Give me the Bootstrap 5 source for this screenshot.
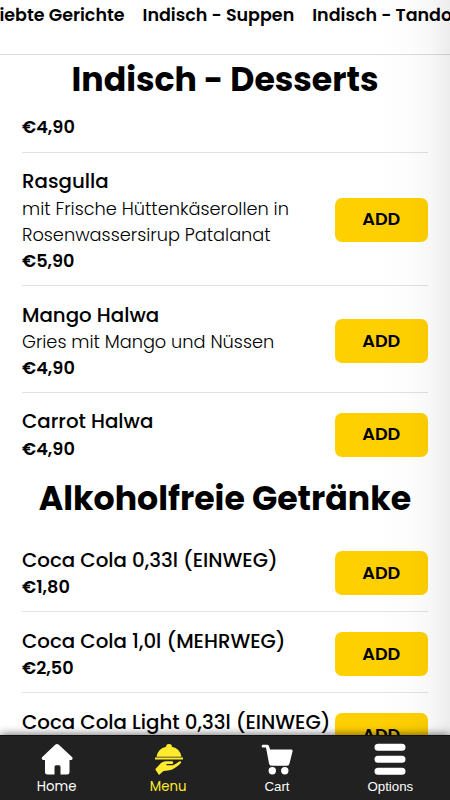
<!DOCTYPE html>
<html lang="de">
<head>
<meta charset="utf-8">
<meta name="viewport" content="width=device-width, initial-scale=1">
<title>Menu</title>
<link href="https://cdn.jsdelivr.net/npm/bootstrap@5.3.0/dist/css/bootstrap.min.css" rel="stylesheet">
<style>
body{font-family:Poppins,Inter,"Open Sans",sans-serif;color:#000;height:800px;overflow:hidden;background:#fff}
.page-shell{width:450px;height:800px}
.cat-nav{height:55px;border-bottom:1px solid #dcdcdc;gap:18px;padding-top:2px}
.cat-nav a{font-size:17.5px;font-weight:600;line-height:26px;color:#000;flex:none}
.cat-nav .cat-first{margin-left:-27.5px}
.menu-list{height:681px}
.menu-title{font-size:33.2px;font-weight:700;line-height:50px;height:50px;margin:0}
.menu-list .second-title{height:56px;line-height:48px}
.dish{margin:0 22px;padding:14px 0 11px;border-bottom:1px solid #e2e2e2}
.dish-tall .dish-name,.dish-end .dish-name{line-height:27px;margin-bottom:1px}
.dish-tall .dish-name{line-height:28px}
.dish-tall .btn-add{margin-bottom:2px}
.dish-cut{padding:9px 0 12px;height:48px}
.drink{padding-top:15px}
.dish-end{border-bottom:0;height:82px;padding-bottom:13px}
.dish-name{font-size:19.8px;font-weight:500;line-height:28px}
.dish-text{font-size:17.75px;font-weight:300;line-height:26px}
.dish-price{font-size:17.7px;font-weight:600;line-height:26px}
.btn-add{width:93.5px;height:44px;border-radius:7px;background:#ffd000;color:#000;font-size:17.7px;font-weight:600;padding:0}
.edge-shade{top:0;right:0;width:76px;height:735px;pointer-events:none;background:linear-gradient(90deg,rgba(0,0,0,0),rgba(0,0,0,.012) 50%,rgba(0,0,0,.03) 75%,rgba(0,0,0,.075))}
.tab-bar{height:65px;padding-top:6px;background:#212121;border-top:1px solid #111;box-shadow:0 0 9px rgba(0,0,0,.65);z-index:3}
.tab-bar a{color:#fff;font-size:13.3px;line-height:18px}
.tab-bar a.active{color:#ffeb2e}
.tab-bar .tab-plain{font-family:"Liberation Sans",Arial,sans-serif}
.tab-bar svg{display:block;width:34px;height:34px;margin-bottom:2px}
</style>
<script src="https://cdn.jsdelivr.net/npm/bootstrap@5.3.0/dist/js/bootstrap.bundle.min.js"></script>
</head>
<body>
<div class="page-shell position-relative d-flex flex-column overflow-hidden">
<nav class="cat-nav d-flex align-items-start flex-shrink-0 overflow-hidden text-nowrap">
<a href="#" class="cat-first text-decoration-none">Beliebte Gerichte</a>
<a href="#" class="text-decoration-none">Indisch - Suppen</a>
<a href="#" class="text-decoration-none">Indisch - Tandoori</a>
</nav>
<main class="menu-list overflow-hidden flex-shrink-0">
<h2 class="menu-title text-center text-nowrap">Indisch - Desserts</h2>
<div class="dish dish-cut"><div class="dish-price">€4,90</div></div>
<div class="dish dish-tall d-flex align-items-center justify-content-between">
<div class="text-nowrap"><div class="dish-name">Rasgulla</div><div class="dish-text">mit Frische Hüttenkäserollen in</div><div class="dish-text">Rosenwassersirup Patalanat</div><div class="dish-price">€5,90</div></div>
<button class="btn btn-add flex-shrink-0">ADD</button></div>
<div class="dish drink d-flex align-items-center justify-content-between">
<div class="text-nowrap"><div class="dish-name">Mango Halwa</div><div class="dish-text">Gries mit Mango und Nüssen</div><div class="dish-price">€4,90</div></div>
<button class="btn btn-add flex-shrink-0">ADD</button></div>
<div class="dish dish-end d-flex align-items-center justify-content-between">
<div class="text-nowrap"><div class="dish-name">Carrot Halwa</div><div class="dish-price">€4,90</div></div>
<button class="btn btn-add flex-shrink-0">ADD</button></div>
<h2 class="menu-title second-title text-center text-nowrap">Alkoholfreie Getränke</h2>
<div class="dish drink d-flex align-items-center justify-content-between">
<div class="text-nowrap"><div class="dish-name">Coca Cola 0,33l (EINWEG)</div><div class="dish-price">€1,80</div></div>
<button class="btn btn-add flex-shrink-0">ADD</button></div>
<div class="dish drink d-flex align-items-center justify-content-between">
<div class="text-nowrap"><div class="dish-name">Coca Cola 1,0l (MEHRWEG)</div><div class="dish-price">€2,50</div></div>
<button class="btn btn-add flex-shrink-0">ADD</button></div>
<div class="dish drink d-flex align-items-center justify-content-between">
<div class="text-nowrap"><div class="dish-name">Coca Cola Light 0,33l (EINWEG)</div><div class="dish-price">&nbsp;</div></div>
<button class="btn btn-add flex-shrink-0">ADD</button></div>
</main>
<div class="edge-shade position-absolute"></div>
<footer class="tab-bar position-absolute bottom-0 start-0 w-100 d-flex justify-content-around">
<a href="#" class="d-flex flex-column align-items-center text-decoration-none"><svg viewBox="0 0 34 34"><path fill="#fff" d="M15.2 2.8Q17 1.200 18.800 2.800L32 15Q33.500 17 31.500 18H29.500V30Q29.500 32.500 27 32.500H20.500V25Q20.500 23.300 19 23.300H16Q14.500 23.300 14.500 25V32.500H7.500Q5 32.500 5 30V18H3Q.8 17 2.300 15Z"/></svg><span>Home</span></a>
<a href="#" class="active d-flex flex-column align-items-center text-decoration-none"><svg viewBox="-1 0 34 34"><path fill="#ffeb2e" d="M4.500 14.800A12.500 12 0 0 1 14.200 4.700Q13.800 2 17 2T19.800 4.700A12.500 12 0 0 1 29.500 14.800ZM3 15.600H31V17.600H3Z"/><path fill="#ffeb2e" d="M3.200 27.300 9 21Q11 19.200 14 19.200H20.500Q22 20.500 20.500 21.900H14.500V23.200H21Q24 21.700 26.700 19.800Q29 18.500 29.200 20.200Q28.800 22 22 26.500Q20 28 16 28.400L11.500 28.900 7 33Z"/></svg><span>Menu</span></a>
<a href="#" class="tab-plain d-flex flex-column align-items-center text-decoration-none"><svg viewBox="0 0 34 34"><path fill="#fff" d="M2.500 2.800H7.500Q8.700 2.800 9.100 4.300L10 7.500H31Q33 7.500 32.500 9.500L29.500 21.500Q29.200 23.800 27 23.800H11.500Q9.500 23.800 9 21.500L6 5.600H2.500Q.8 4.200 2.500 2.800Z"/><circle cx="12.300" cy="28.700" r="3.700" fill="#fff"/><circle cx="24.800" cy="28.700" r="3.700" fill="#fff"/></svg><span>Cart</span></a>
<a href="#" class="tab-plain d-flex flex-column align-items-center text-decoration-none"><svg viewBox="0 0 34 34"><path stroke="#fff" stroke-width="7" stroke-linecap="round" d="M5 5.200H29M5 17.300H29M5 29.300H29"/></svg><span>Options</span></a>
</footer>
</div>
</body>
</html>
